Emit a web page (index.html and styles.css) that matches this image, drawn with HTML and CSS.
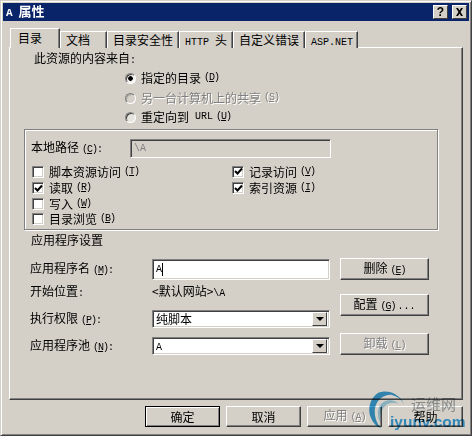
FILE: index.html
```html
<!DOCTYPE html>
<html lang="zh-CN">
<head>
    <meta charset="UTF-8">
    <title>A 属性</title>
    <link rel="stylesheet" href="styles.css">
</head>
<body>
    <div class="dialog">
        <div class="titlebar">
            <span class="title"><span class="title-a">A</span>属性</span>
            <span class="caption-btn caption-help">?</span>
            <span class="caption-btn caption-close">
                <svg width="9" height="8" viewBox="0 0 9 8"><path d="M1 0h2l1.500 2.500L6 0h2L5.500 4 8 8H6L4.500 5.500 3 8H1l2.500-4z" fill="#000"/></svg>
            </span>
        </div>

        <div class="tabs">
            <div class="tab tab-active">目录</div>
            <div class="tab tab-doc">文档</div>
            <div class="tab tab-sec">目录安全性</div>
            <div class="tab tab-http"><span class="lat">HTTP </span>头</div>
            <div class="tab tab-err">自定义错误</div>
            <div class="tab tab-asp"><span class="lat">ASP.NET</span></div>
        </div>

        <div class="page">
            <div class="source-title">此资源的内容来自<span class="lat">:</span></div>
            <div class="radio-row"><span class="radio radio-on"></span>指定的目录<span class="key">(<u>D</u>)</span></div>
            <div class="radio-row radio-row-off"><span class="radio"></span>另一台计算机上的共享<span class="key">(<u>S</u>)</span></div>
            <div class="radio-row radio-row-last"><span class="radio"></span>重定向到<span class="lat"> URL</span><span class="key">(<u>U</u>)</span></div>

            <div class="group">
                <div class="path-row">
                    <label class="path-label">本地路径<span class="key">(<u>C</u>):</span></label>
                    <input class="path-input sunken" type="text" value="\A" disabled>
                </div>
                <div class="checks">
                    <div class="check-row"><span class="check"></span>脚本资源访问<span class="key">(<u>T</u>)</span></div>
                    <div class="check-row">
                        <span class="check"><svg width="9" height="9" viewBox="0 0 9 9"><path d="M1 4l2.500 2.500L8 1.500" fill="none" stroke="#000" stroke-width="2"/></svg></span>记录访问<span class="key">(<u>V</u>)</span>
                    </div>
                    <div class="check-row">
                        <span class="check"><svg width="9" height="9" viewBox="0 0 9 9"><path d="M1 4l2.500 2.500L8 1.500" fill="none" stroke="#000" stroke-width="2"/></svg></span>读取<span class="key">(<u>R</u>)</span>
                    </div>
                    <div class="check-row">
                        <span class="check"><svg width="9" height="9" viewBox="0 0 9 9"><path d="M1 4l2.500 2.500L8 1.500" fill="none" stroke="#000" stroke-width="2"/></svg></span>索引资源<span class="key">(<u>I</u>)</span>
                    </div>
                    <div class="check-row"><span class="check"></span>写入<span class="key">(<u>W</u>)</span></div>
                    <div class="check-row"></div>
                    <div class="check-row"><span class="check"></span>目录浏览<span class="key">(<u>B</u>)</span></div>
                </div>
            </div>

            <div class="app-title">应用程序设置</div>

            <div class="app-settings">
                <div class="app-fields">
                    <div class="field field-name">
                        <label class="field-label">应用程序名<span class="key">(<u>M</u>):</span></label>
                        <div class="name-input sunken"><span class="lat">A</span><span class="caret"></span></div>
                    </div>
                    <div class="field field-start">
                        <label class="field-label">开始位置<span class="lat">:</span></label>
                        <span>&lt;默认网站&gt;<span class="lat">\A</span></span>
                    </div>
                    <div class="field field-perm">
                        <label class="field-label">执行权限<span class="key">(<u>P</u>):</span></label>
                        <div class="combo sunken">
                            <span class="combo-text">纯脚本</span>
                            <span class="combo-arrow"></span>
                        </div>
                    </div>
                    <div class="field field-pool">
                        <label class="field-label">应用程序池<span class="key">(<u>N</u>):</span></label>
                        <div class="combo sunken">
                            <span class="combo-text"><span class="lat">A</span></span>
                            <span class="combo-arrow"></span>
                        </div>
                    </div>
                </div>
                <div class="app-buttons">
                    <button class="btn btn-side" type="button">删除<span class="key">(<u>E</u>)</span></button>
                    <button class="btn btn-side" type="button">配置<span class="key">(<u>G</u>)</span><span class="dots">...</span></button>
                    <button class="btn btn-side btn-unload btn-off" type="button">卸载<span class="key">(<u>L</u>)</span></button>
                </div>
            </div>
        </div>

        <div class="footer">
            <button class="btn btn-foot btn-default" type="button">确定</button>
            <button class="btn btn-foot" type="button">取消</button>
            <button class="btn btn-foot btn-off" type="button">应用<span class="key">(<u>A</u>)</span></button>
            <button class="btn btn-foot" type="button">帮助</button>
        </div>

        <!-- watermark sits on top of the footer -->
        <div class="watermark">
            <svg class="wm-swirl" width="36" height="39" viewBox="0 0 36 39">
                <path d="M35 14C30 3 18-1 9 3 1 8-2 20 2 28c2 5 6 9 10 10-5-5-7-13-6-20C8 9 16 4 23 5c5 1 9 4 12 9z" fill="#3aa0dc"/>
                <path d="M30 14c-6-6-16-5-20 3-2 5-1 11 1 15 0-6 1-12 5-16 4-4 9-4 14-2z" fill="#a5d8f2"/>
            </svg>
            <span class="wm-cn">运维网</span>
            <span class="wm-en">iyunv.com</span>
        </div>
    </div>
</body>
</html>
```

FILE: styles.css
```css
html, body {
    margin: 0;
    padding: 0;
}

body {
    width: 472px;
    height: 436px;
    overflow: hidden;
    font-family: "Noto Sans CJK SC", "Liberation Sans", sans-serif;
    font-size: 12px;
    line-height: 14px;
    color: #000;
    background-color: #d4d0c8;
}

/* latin letters of the old bitmap font are half a CJK cell wide */
.lat,
.key,
.dots {
    font-family: "Liberation Mono", monospace;
    font-size: 10px;
    white-space: pre;
}

/* access keys like (D) are squeezed tighter than the rest */
.key {
    margin-left: 3px;
    letter-spacing: -1px;
}

.dots {
    margin-left: 2px;
}

.dialog {
    position: relative;
    box-sizing: border-box;
    width: 472px;
    height: 436px;
    padding: 3px;
    background-color: #d4d0c8;
    border: 1px solid;
    border-color: #d4d0c8 #404040 #404040 #d4d0c8;
    box-shadow: inset 1px 1px 0 #fff, inset -1px -1px 0 #808080;
    overflow: hidden;
}

.titlebar {
    display: flex;
    align-items: center;
    height: 18px;
    margin: -1px -1px 0 -1px;
    padding: 0 2px 0 3px;
    background-color: #0a246a;
    color: #fff;
}

.title {
    flex: 1;
    font-size: 13px;
    font-weight: bold;
}

.title-a {
    font-family: "Liberation Mono", monospace;
    font-size: 11px;
    margin-right: 6px;
}

.caption-btn {
    display: flex;
    align-items: center;
    justify-content: center;
    box-sizing: border-box;
    width: 15px;
    height: 14px;
    background-color: #d4d0c8;
    color: #000;
    border: 1px solid;
    border-color: #fff #404040 #404040 #fff;
    font-family: "Liberation Sans", sans-serif;
    font-size: 12px;
    font-weight: bold;
}

.caption-close {
    margin-left: 4px;
}

.tabs {
    position: relative;
    z-index: 1;
    display: flex;
    align-items: flex-end;
    height: 27px;
    margin: 0 0 -1px 5px;
    padding-left: 1px;
}

.tab {
    box-sizing: border-box;
    height: 17px;
    padding: 1px 0 0 5px;
    background-color: #d4d0c8;
    border-top: 1px solid #fff;
    border-left: 1px solid #fff;
    border-right: 1px solid #404040;
    box-shadow: inset -1px 0 0 #808080;
    white-space: nowrap;
}

.tab-active {
    width: 50px;
    height: 20px;
    padding: 2px 0 0 7px;
}

.tab-doc {
    width: 47px;
}

.tab-sec {
    width: 72px;
}

.tab-http {
    width: 54px;
}

.tab-err {
    width: 72px;
}

.tab-asp {
    width: 53px;
}

.page {
    box-sizing: border-box;
    width: 454px;
    height: 353px;
    margin-left: 5px;
    border: 1px solid;
    border-color: #fff #404040 #404040 #fff;
    box-shadow: inset -1px -1px 0 #808080;
}

.source-title {
    height: 20px;
    padding-left: 24px;
    line-height: 20px;
}

.radio-row {
    display: flex;
    align-items: center;
    height: 20px;
    padding-left: 115px;
}

.radio-row-off {
    color: #808080;
    text-shadow: 1px 1px 0 #fff;
}

.radio-row-last {
    height: 18px;
}

.radio {
    box-sizing: border-box;
    flex: none;
    width: 11px;
    height: 11px;
    margin-right: 5px;
    border: 1px solid;
    border-color: #808080 #fff #fff #808080;
    border-radius: 50%;
    background-color: #e6e4de;
    box-shadow: inset 1px 1px 0 #404040;
}

.radio-row-off .radio {
    background-color: #d4d0c8;
    box-shadow: inset 1px 1px 0 #a8a6a0;
}

.radio-on {
    background: radial-gradient(circle, #000 0, #000 2px, #f2f1ee 2.600px);
}

.group {
    box-sizing: border-box;
    width: 414px;
    height: 101px;
    margin: 3px 0 0 14px;
    padding: 9px 0 0 6px;
    border: 1px solid #808080;
    box-shadow: inset 1px 1px 0 #fff, 1px 1px 0 #fff;
}

.path-row {
    display: flex;
    align-items: center;
    height: 19px;
}

.path-label {
    width: 99px;
}

.path-input {
    height: 19px;
    width: 201px;
    padding: 0 3px;
    background-color: #d4d0c8;
    color: #808080;
    font-family: "Liberation Mono", monospace;
    font-size: 10px;
}

.sunken {
    box-sizing: border-box;
    border: 1px solid;
    border-color: #808080 #fff #fff #808080;
    box-shadow: inset 1px 1px 0 #404040, inset -1px -1px 0 #d4d0c8;
    outline: none;
}

.checks {
    display: grid;
    grid-template-columns: 200px 1fr;
    grid-template-rows: 17px 16px 15px 16px;
    margin-top: 5px;
    padding-left: 1px;
}

.check-row {
    display: flex;
    align-items: center;
}

.check {
    display: flex;
    align-items: center;
    justify-content: center;
    box-sizing: border-box;
    flex: none;
    width: 12px;
    height: 12px;
    margin-right: 5px;
    background-color: #fff;
    border: 1px solid;
    border-color: #808080 #fff #fff #808080;
    box-shadow: inset 1px 1px 0 #404040, inset -1px -1px 0 #d4d0c8;
}

.app-title {
    height: 18px;
    margin-top: 1px;
    padding-left: 21px;
    line-height: 18px;
}

.app-settings {
    display: flex;
    margin: 9px 0 0 20px;
}

.app-fields {
    width: 310px;
    padding-top: 1px;
}

.field {
    display: flex;
    align-items: center;
}

.field-label {
    flex: none;
    width: 122px;
}

.field-name {
    height: 21px;
}

.field-start {
    height: 24px;
}

.field-perm,
.field-pool {
    height: 18px;
}

.field-perm {
    margin-top: 6px;
}

.field-pool {
    margin-top: 9px;
}

.name-input {
    display: flex;
    align-items: center;
    width: 178px;
    height: 21px;
    padding-left: 3px;
    background-color: #fff;
}

.caret {
    width: 1px;
    height: 13px;
    background-color: #000;
}

.combo {
    display: flex;
    align-items: center;
    width: 178px;
    height: 18px;
    padding: 0 2px 0 3px;
    background-color: #fff;
}

.combo-text {
    flex: 1;
}

.combo-arrow {
    display: flex;
    align-items: center;
    justify-content: center;
    box-sizing: border-box;
    width: 15px;
    height: 14px;
    background-color: #d4d0c8;
    border: 1px solid;
    border-color: #fff #404040 #404040 #fff;
}

.combo-arrow::after {
    content: "";
    border-top: 4px solid #000;
    border-left: 4px solid transparent;
    border-right: 4px solid transparent;
}

.app-buttons {
    display: flex;
    flex-direction: column;
}

.btn {
    box-sizing: border-box;
    margin: 0;
    padding: 0;
    background-color: #d4d0c8;
    color: #000;
    border: 1px solid;
    border-color: #fff #404040 #404040 #fff;
    box-shadow: inset -1px -1px 0 #808080;
    font-family: "Noto Sans CJK SC", "Liberation Sans", sans-serif;
    font-size: 12px;
    line-height: 14px;
}

.btn-side {
    width: 89px;
    height: 22px;
    margin-bottom: 14px;
}

.btn-unload {
    margin-top: 3px;
}

.btn-off {
    color: #808080;
    text-shadow: 1px 1px 0 #fff;
}

.footer {
    display: flex;
    justify-content: flex-end;
    gap: 6px;
    margin-top: 6px;
    padding-right: 5px;
}

.btn-foot {
    width: 75px;
    height: 21px;
}

.btn-default {
    border-color: #000;
    box-shadow: inset 1px 1px 0 #fff, inset -1px -1px 0 #808080;
}

/* multiply keeps the button label and frame lines visible through the mark */
.watermark {
    position: absolute;
    left: 368px;
    top: 389px;
    width: 100px;
    height: 42px;
    mix-blend-mode: multiply;
}

.wm-swirl {
    position: absolute;
    left: 0;
    top: 0;
}

.wm-cn {
    position: absolute;
    left: 42px;
    top: 5px;
    color: #a0a8ad;
    font-size: 15px;
    line-height: 17px;
}

.wm-en {
    position: absolute;
    left: 21px;
    top: 22px;
    color: #3aa5ea;
    font-family: "Liberation Sans", sans-serif;
    font-size: 15.500px;
    line-height: 19px;
    font-weight: bold;
}
```
